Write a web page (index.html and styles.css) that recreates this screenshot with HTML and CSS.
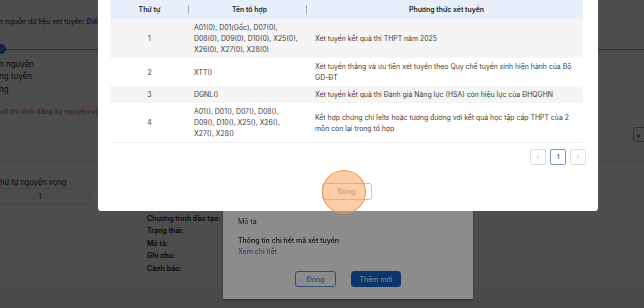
FILE: index.html
```html
<!DOCTYPE html>
<html lang="vi">
  <head>
    <meta charset="UTF-8" />
    <meta name="viewport" content="width=device-width, initial-scale=1.0" />
    <title>Nguyện vọng xét tuyển</title>
    <link rel="stylesheet" href="styles.css">
  </head>
  <body>
    <!-- page behind the dialogs -->
    <main class="page">
      <section class="wizard">
        <p class="source">n nguồn dữ liệu xét tuyển: <b>Điểm thi THPT</b></p>
        <div class="steps">
          <span class="step-dot">
            <svg viewBox="0 0 10 10" width="6" height="6"><path d="M2 5.2l2 2 4-4.4" fill="none" stroke="#fff" stroke-width="1.4" stroke-linecap="round" stroke-linejoin="round"/></svg>
          </span>
          <span class="step-line"></span>
        </div>
        <ul class="step-names">
          <li>h nguyện</li>
          <li>ng tuyển</li>
          <li>ng</li>
        </ul>
        <p class="warn">với thí sinh đăng ký nguyện vọng</p>
        <div class="wizard-actions">
          <button class="side-btn">×</button>
        </div>
      </section>

      <section class="form">
        <p class="field-label">hứ tự nguyện vọng</p>
        <div class="order-input">1</div>
        <ul class="summary">
          <li>Chương trình đào tạo:</li>
          <li>Trạng thái:</li>
          <li>Mô tả:</li>
          <li>Ghi chú:</li>
          <li>Cảnh báo:</li>
        </ul>
      </section>

      <footer class="page-foot"></footer>
    </main>

    <!-- add dialog -->
    <div class="mask"></div>
    <div class="dialog dialog-add">
      <p class="desc-title">Mô tả</p>
      <p class="detail-title">Thông tin chi tiết mã xét tuyển</p>
      <a class="link">Xem chi tiết</a>
      <div class="dialog-foot">
        <button class="btn btn-outline">Đóng</button>
        <button class="btn btn-primary">Thêm mới</button>
      </div>
    </div>

    <!-- combination list dialog -->
    <div class="mask"></div>
    <div class="dialog dialog-list">
      <table class="combo-table">
        <colgroup>
          <col class="c-no" />
          <col class="c-combo" />
          <col class="c-method" />
        </colgroup>
        <thead>
          <tr>
            <th>Thứ tự</th>
            <th>Tên tổ hợp</th>
            <th>Phương thức xét tuyển</th>
          </tr>
        </thead>
        <tbody>
          <tr>
            <td>1</td>
            <td>A01(0), D01(Gốc), D07(0),<br>D08(0), D09(0), D10(0), X25(0),<br>X26(0), X27(0), X28(0)</td>
            <td>Xét tuyển kết quả thi THPT năm 2025</td>
          </tr>
          <tr>
            <td>2</td>
            <td>XTT()</td>
            <td>Xét tuyển thẳng và ưu tiên xét tuyển theo Quy chế tuyển sinh hiện hành của Bộ<br>GD-ĐT</td>
          </tr>
          <tr>
            <td>3</td>
            <td>DGNL()</td>
            <td>Xét tuyển kết quả thi Đánh giá Năng lực (HSA) còn hiệu lực của ĐHQGHN</td>
          </tr>
          <tr>
            <td>4</td>
            <td>A01(), D01(), D07(), D08(),<br>D09(), D10(), X25(), X26(),<br>X27(), X28()</td>
            <td>Kết hợp chứng chỉ Ielts hoặc tương đương với kết quả học tập cấp THPT của 2<br>môn còn lại trong tổ hợp</td>
          </tr>
        </tbody>
      </table>

      <div class="pager">
        <span class="page-item disabled">
          <svg viewBox="0 0 8 8" width="6" height="6"><path d="M5 1.5L2.5 4 5 6.5" fill="none" stroke="currentColor" stroke-width="0.9"/></svg>
        </span>
        <span class="page-item current">1</span>
        <span class="page-item disabled">
          <svg viewBox="0 0 8 8" width="6" height="6"><path d="M3 1.5L5.5 4 3 6.5" fill="none" stroke="currentColor" stroke-width="0.9"/></svg>
        </span>
      </div>

      <div class="list-foot">
        <button class="btn btn-ghost">Đóng</button>
      </div>
    </div>

    <!-- click marker -->
    <span class="tap"></span>
  </body>
</html>
```

FILE: styles.css
```css
body {
  margin: 0;
  width: 644px;
  height: 308px;
  overflow: hidden;
  background: #fff;
  font-family: Inter, "Noto Sans", sans-serif;
  color: #222;
}

p,
ul {
  margin: 0;
  padding: 0;
}

ul {
  list-style: none;
}

button {
  font-family: inherit;
}

/* page */

.page {
  height: 308px;
  display: flex;
  flex-direction: column;
}

.wizard {
  padding-top: 16px;
}

.source {
  font-size: 7px;
  line-height: 12px;
  white-space: nowrap;
  margin-left: -1px;
}

.source > b {
  color: #2f6fd0;
  font-weight: 700;
}

.steps {
  margin-top: 16px;
  height: 10px;
  display: flex;
  align-items: center;
}

.step-dot {
  width: 10px;
  height: 10px;
  margin-left: -4px;
  border-radius: 50%;
  background: #2d68cf;
  display: flex;
  align-items: center;
  justify-content: center;
  flex: none;
}

.step-line {
  flex: 1;
  height: 1px;
  background: #7d98d6;
}

.step-names {
  margin-top: 3.75px;
  font-size: 8px;
  line-height: 12.5px;
  margin-left: -1px;
}

.warn {
  margin-top: 10.25px;
  font-size: 7px;
  line-height: 11px;
  color: #e04848;
  white-space: nowrap;
  margin-left: -1px;
}

.wizard-actions {
  margin-top: 10.5px;
  display: flex;
  justify-content: flex-end;
}

.side-btn {
  width: 14px;
  height: 15px;
  margin-right: -3px;
  padding: 0 3px 0 0;
  border: 1px solid #8ca6d9;
  border-radius: 3px;
  background: #fff;
  font-size: 8px;
  line-height: 1;
  color: #333;
}

.form {
  margin-top: 19px;
  border-top: 1px solid #e4e4e4;
  padding-top: 14.5px;
}

.field-label {
  font-size: 7.5px;
  line-height: 11px;
}

.order-input {
  margin: 0.5px 0 0 -10px;
  width: 100px;
  height: 17px;
  box-sizing: border-box;
  border: 1px solid #e6e6e6;
  border-radius: 4px;
  background: #fafafa;
  font-size: 7px;
  display: flex;
  align-items: center;
  justify-content: center;
}

.summary {
  margin: 7.75px 0 0 147px;
  font-size: 7px;
  line-height: 12.5px;
  font-weight: 600;
  color: #111;
}

.page-foot {
  margin-top: auto;
  height: 20px;
  border-top: 1px solid #fff;
  background: #f6f6f6;
}

/* dialogs */

.mask {
  position: fixed;
  inset: 0;
  background: rgba(0, 0, 0, 0.45);
}

.dialog {
  position: fixed;
  box-sizing: border-box;
  background: #fff;
  display: flex;
  flex-direction: column;
}

.dialog-add {
  left: 223px;
  top: 200px;
  width: 250px;
  height: 99px;
  padding: 16px 15px 12px;
  font-size: 7px;
  box-shadow: 0 1px 2px rgba(0, 0, 0, 0.45);
}

.desc-title {
  line-height: 11px;
  color: #333;
}

.detail-title {
  margin-top: 8px;
  line-height: 11px;
  font-weight: 500;
  color: #1f1f1f;
}

.link {
  display: block;
  line-height: 11px;
  color: #2f6fd0;
}

.dialog-foot {
  margin-top: 14px;
  display: flex;
  justify-content: center;
  gap: 15px;
}

.btn {
  height: 16px;
  padding: 0;
  border-radius: 3px;
  font-size: 7px;
  cursor: pointer;
}

.btn-outline {
  width: 41px;
  border: 1px solid #5b8ed6;
  background: #fff;
  color: #2f6fd0;
}

.btn-primary {
  width: 50px;
  border: 1px solid #1a5fc9;
  background: #1a5fc9;
  color: #fff;
}

.dialog-list {
  left: 98px;
  top: 0;
  width: 500px;
  height: 211px;
  padding: 0 15px 0 12px;
  border-radius: 0 0 3px 3px;
}

.combo-table {
  width: 473px;
  table-layout: fixed;
  border-collapse: collapse;
  font-size: 6.9px;
  color: #404040;
}

.c-no {
  width: 79px;
}

.c-combo {
  width: 121px;
}

.combo-table th {
  position: relative;
  height: 19px;
  padding: 0;
  background: #e7effb;
  font-weight: 600;
  color: #222;
  text-align: center;
}

.combo-table th:first-child::before,
.combo-table th:nth-child(2)::before {
  content: "";
  position: absolute;
  top: 5px;
  right: 0;
  width: 1px;
  height: 9px;
  background: #a8a8a8;
}

.combo-table th:nth-child(2)::before {
  right: 3px;
}

.combo-table td {
  padding: 3px 3px 3px 5px;
  line-height: 11px;
  text-align: left;
  vertical-align: middle;
  white-space: nowrap;
}

.combo-table td:first-child {
  text-align: center;
  padding: 3px 0;
}

.combo-table tbody tr:nth-child(odd) {
  background: #f5f5f5;
}

.combo-table tbody tr:last-child {
  border-bottom: 1px solid #eeeeee;
}

.pager {
  margin: 6px -3px 0 0;
  display: flex;
  justify-content: flex-end;
  gap: 4px;
}

.page-item {
  width: 16px;
  height: 16px;
  box-sizing: border-box;
  border: 1px solid #dedede;
  border-radius: 2px;
  display: flex;
  align-items: center;
  justify-content: center;
  font-size: 6.5px;
  font-weight: 600;
  color: #bdbdbd;
}

.page-item.current {
  border-color: #7a97c4;
  color: #3a5d92;
}

.list-foot {
  margin-top: 18px;
  display: flex;
  justify-content: center;
}

.btn-ghost {
  width: 50px;
  height: 17px;
  border: 1px solid #a9c8ec;
  background: #fff;
  color: #8c8c8c;
}

/* click marker */

.tap {
  position: fixed;
  left: 322px;
  top: 170px;
  width: 44px;
  height: 44px;
  box-sizing: border-box;
  border-radius: 50%;
  border: 1.5px solid rgba(245, 145, 60, 0.9);
  background: rgba(249, 155, 80, 0.5);
}
```
